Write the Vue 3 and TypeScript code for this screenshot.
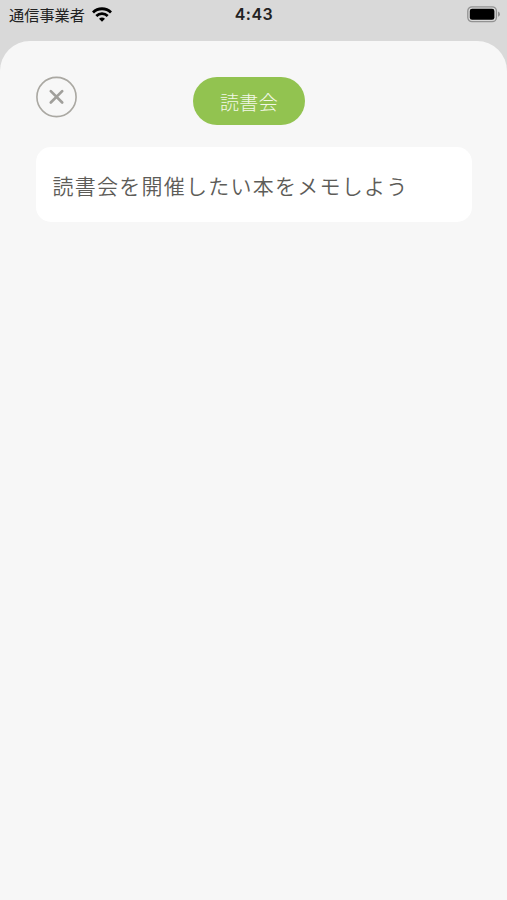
<script setup lang="ts">
import { ref } from 'vue'

const carrier = ref<string>('通信事業者')
const time = ref<string>('4:43')
const category = ref<string>('読書会')
const memo = ref<string>('読書会を開催したい本をメモしよう')
</script>

<template>
  <div class="screen">
    <header class="status">
      <div class="network">
        <span class="carrier">{{ carrier }}</span>
        <svg class="wifi" width="20" height="15" viewBox="0 0 20 15" aria-hidden="true">
          <g fill="none" stroke="#000" stroke-width="2.8">
            <path d="M1 5.4C6 .5 14 .5 19 5.4" />
            <path d="M4.3 8.9C7.6 5.8 12.4 5.8 15.7 8.9" />
          </g>
          <path d="M7 11.8Q10 9.2 13 11.8L10 14.8Z" />
        </svg>
      </div>
      <span class="time">{{ time }}</span>
      <svg class="battery" width="33" height="17" viewBox="0 0 33 17" aria-hidden="true">
        <rect x=".8" y=".8" width="28.6" height="14.9" rx="4.2" fill="none" stroke="#929292" stroke-width="1.3" />
        <rect x="2.8" y="2.8" width="24.6" height="10.9" rx="2.3" fill="#000" />
        <path d="M31 5.6Q33 6.4 33 8.2T31 10.8Z" fill="#929292" />
      </svg>
    </header>
    <main class="sheet">
      <div class="toolbar">
        <button class="close" type="button" aria-label="閉じる">
          <svg width="41" height="41" viewBox="0 0 41 41">
            <circle cx="20.5" cy="20" r="19.6" fill="none" stroke="#aaa8a2" stroke-width="1.6" />
            <path d="M14.8 14.1L26.2 25.5M26.2 14.1L14.8 25.5" stroke="#a09f9b" stroke-width="2.7" stroke-linecap="round" />
          </svg>
        </button>
        <div class="category">{{ category }}</div>
      </div>
      <div class="memo">{{ memo }}</div>
    </main>
  </div>
</template>

<style>
body {
  margin: 0;
  background: #d9d9d9;
}
</style>

<style scoped>
.screen {
  display: flex;
  flex-direction: column;
  height: 900px;
  overflow: hidden;
  background: #d9d9d9;
  font-family: "Noto Sans CJK JP", sans-serif;
}

.status {
  display: grid;
  grid-template-columns: 1fr auto 1fr;
  align-items: center;
  box-sizing: border-box;
  height: 41px;
  padding: 0 7px 12px 8px;
  color: #222;
}

.network {
  display: flex;
  align-items: center;
  gap: 7px;
  padding-left: 1px;
}

.carrier {
  font-size: 15.2px;
  line-height: 29px;
}

.time {
  font-family: Inter, sans-serif;
  font-size: 16px;
  font-weight: 600;
  letter-spacing: 0.5px;
  line-height: 29px;
}

.battery {
  justify-self: end;
}

.sheet {
  flex: 1;
  padding: 35.5px 35.5px 0 36px;
  border-radius: 30px 30px 0 0;
  background: #f7f7f7;
}

.toolbar {
  display: grid;
  grid-template-columns: 156.5px auto 1fr;
  align-items: start;
  margin-bottom: 21.5px;
}

.close {
  width: 41px;
  height: 41px;
  padding: 0;
  border: 0;
  background: none;
}

.close svg {
  display: block;
  overflow: visible;
}

.category {
  box-sizing: border-box;
  width: 112px;
  height: 48.5px;
  padding-left: 1px;
  border-radius: 25px;
  background: #92c350;
  color: #f2f8e8;
  font-size: 19px;
  font-weight: 300;
  letter-spacing: 0.3px;
  line-height: 50px;
  text-align: center;
}

.memo {
  box-sizing: border-box;
  height: 75.5px;
  padding-left: 16.5px;
  border-radius: 15px;
  background: #fff;
  color: #5d5c58;
  font-size: 21px;
  font-weight: 350;
  letter-spacing: 1.25px;
  line-height: 76px;
  white-space: nowrap;
}
</style>
